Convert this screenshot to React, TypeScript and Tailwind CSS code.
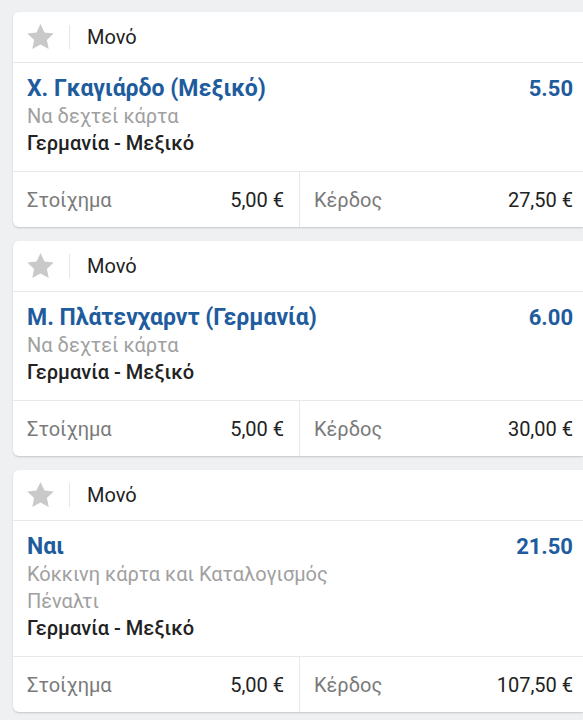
const bets = [
  {
    pick: 'Χ. Γκαγιάρδο (Μεξικό)',
    odds: '5.50',
    market: ['Να δεχτεί κάρτα'],
    match: 'Γερμανία - Μεξικό',
    stake: '5,00 €',
    win: '27,50 €',
  },
  {
    pick: 'Μ. Πλάτενχαρντ (Γερμανία)',
    odds: '6.00',
    market: ['Να δεχτεί κάρτα'],
    match: 'Γερμανία - Μεξικό',
    stake: '5,00 €',
    win: '30,00 €',
  },
  {
    pick: 'Ναι',
    odds: '21.50',
    market: ['Κόκκινη κάρτα και Καταλογισμός', 'Πέναλτι'],
    match: 'Γερμανία - Μεξικό',
    stake: '5,00 €',
    win: '107,50 €',
  },
];

const Star = () => (
  <svg width="29" height="28" viewBox="0 0 24 23" className="shrink-0">
    <path
      d="M12 0.8l3.3 7 7.6 0.9-5.6 5.2 1.5 7.6L12 17.7l-6.8 3.8 1.5-7.6L1.1 8.7l7.6-0.9z"
      fill="#c9c9c9"
    />
  </svg>
);

type Bet = (typeof bets)[number];

function BetCard({ bet }: { bet: Bet }) {
  return (
    <div className="ml-[13px] bg-white rounded-l-[6px] shadow-[0_1px_2px_rgba(0,0,0,0.18)]">
      <div className="flex items-center h-[51px] pl-[13px] border-b border-[#e8e8e8]">
        <Star />
        <div className="w-px h-[24px] bg-[#e6e6e6] ml-[14px]" />
        <span className="ml-[17px] text-[20px] text-[#222]">Μονό</span>
      </div>
      <div className="pl-[14px] pr-[10px] pt-[12px] pb-[14px] border-b border-[#e8e8e8]">
        <div className="flex justify-between items-baseline">
          <span className="text-[23px] leading-[28px] font-bold text-[#1e5c9e]">{bet.pick}</span>
          <span className="text-[22px] leading-[28px] font-bold text-[#1e5c9e]">{bet.odds}</span>
        </div>
        {bet.market.map((m) => (
          <div key={m} className="text-[20px] leading-[27px] text-[#a0a0a0]">
            {m}
          </div>
        ))}
        <div className="text-[20px] leading-[27px] font-medium text-[#222]">{bet.match}</div>
      </div>
      <div className="grid grid-cols-[287px_1fr] h-[55px] text-[20px]">
        <div className="flex items-center justify-between pl-[14px] pr-[15px] border-r border-[#e8e8e8]">
          <span className="text-[#7a7a7a]">Στοίχημα</span>
          <span className="text-[#222]">{bet.stake}</span>
        </div>
        <div className="flex items-center justify-between pl-[14px] pr-[10px]">
          <span className="text-[#7a7a7a]">Κέρδος</span>
          <span className="text-[#222]">{bet.win}</span>
        </div>
      </div>
    </div>
  );
}

export default function App() {
  return (
    <div
      className="min-h-screen bg-[#eef0f2] pt-[12px] flex flex-col gap-[14px] overflow-hidden"
      style={{ fontFamily: 'Roboto, "Noto Sans", sans-serif' }}
    >
      {bets.map((b) => (
        <BetCard key={b.pick} bet={b} />
      ))}
    </div>
  );
}
